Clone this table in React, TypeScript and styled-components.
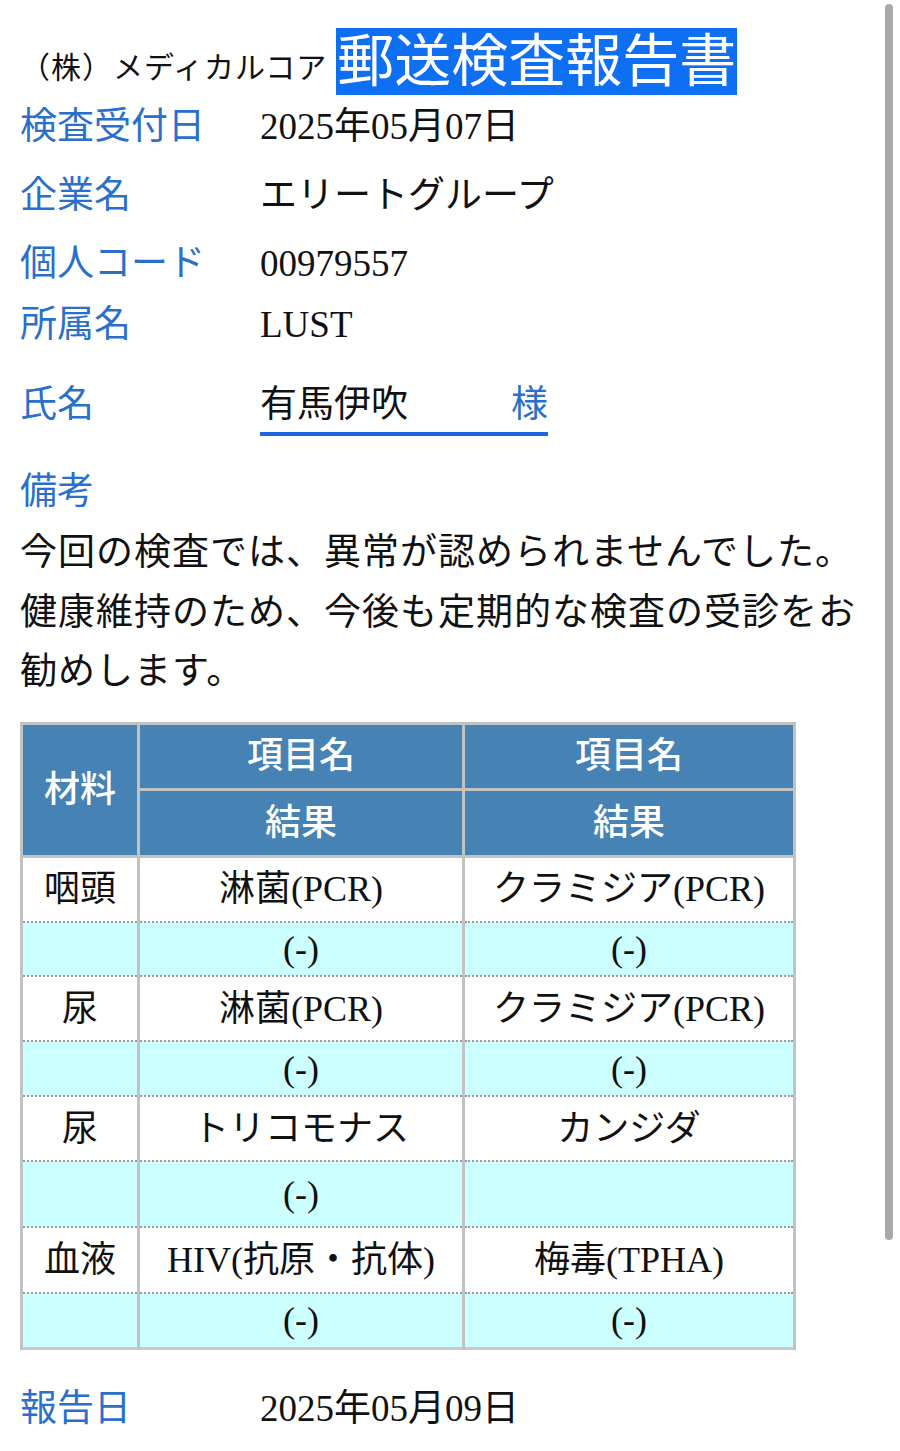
import React from "react";
import styled, { createGlobalStyle } from "styled-components";

const GlobalStyle = createGlobalStyle`
  html, body {
    margin: 0;
    padding: 0;
    background: #ffffff;
  }
  body {
    font-family: "Liberation Serif", "Noto Sans CJK JP", serif;
    color: #111111;
  }
`;

const Page = styled.div`
  padding: 28px 20px 40px 20px;
  width: 900px;
  box-sizing: border-box;
`;

const Header = styled.header`
  display: flex;
  align-items: flex-end;
  height: 67px;
`;

const Company = styled.span`
  font-size: 30px;
  letter-spacing: 1px;
  line-height: 40px;
  padding-bottom: 7px;
  margin-right: 9px;
  white-space: nowrap;
`;

const Title = styled.h1`
  margin: 0;
  font-size: 57px;
  line-height: 67px;
  font-weight: 400;
  color: #ffffff;
  background: #0f6ff2;
  padding: 0 1px;
  white-space: nowrap;
`;

const InfoRow = styled.div<{ $mt: number }>`
  display: grid;
  grid-template-columns: 240px auto;
  margin-top: ${(p) => p.$mt}px;
  font-size: 37px;
  line-height: 50px;
  align-items: start;
`;

const Label = styled.div`
  color: #2a6fca;
  white-space: nowrap;
`;

const Value = styled.div`
  white-space: nowrap;
`;

const NameBox = styled.div`
  display: flex;
  justify-content: space-between;
  width: 288px;
  padding-bottom: 2px;
  border-bottom: 4px solid #1b66dc;
`;

const Honorific = styled.span`
  color: #2a6fca;
`;

const NoteLabel = styled.div`
  margin-top: 31px;
  font-size: 37px;
  line-height: 50px;
  color: #2a6fca;
`;

const Note = styled.div`
  margin: 6px 0 0 0;
  font-size: 37px;
  letter-spacing: 1px;
  line-height: 59.5px;
  width: 852px;
`;

const Sentence = styled.p`
  margin: 0;
`;

const Table = styled.table`
  margin-top: 20px;
  border-collapse: collapse;
  width: 773px;
  table-layout: fixed;
  border: 3px solid #c9c9c9;
  font-size: 36px;
  text-align: center;
`;

const HeadCell = styled.th`
  background: #4682b4;
  color: #ffffff;
  font-weight: 500;
  border: 3px solid #c2c2c2;
  padding: 0;
  line-height: 44px;
`;

const BodyRow = styled.tr<{ $h: number; $result?: boolean }>`
  height: ${(p) => p.$h}px;
  background: ${(p) => (p.$result ? "#ccffff" : "#ffffff")};
`;

const HeadRow = styled.tr<{ $h: number }>`
  height: ${(p) => p.$h}px;
`;

const Cell = styled.td<{ $first: boolean }>`
  padding: 0;
  line-height: 44px;
  white-space: nowrap;
  border-left: 3px solid #c2c2c2;
  border-right: 3px solid #c2c2c2;
  border-top: ${(p) => (p.$first ? "3px solid #c2c2c2" : "2px dotted #9a9a9a")};
  border-bottom: 2px dotted #9a9a9a;
`;

const ReportRow = styled(InfoRow)``;

const Scrollbar = styled.div`
  position: fixed;
  top: 4px;
  right: 7px;
  width: 8px;
  height: 1236px;
  border-radius: 4px;
  background: #a9a9a9;
`;

type Item = {
  material: string;
  a: string;
  b: string;
  ra: string;
  rb: string;
  h: number;
  rh: number;
};

const items: Item[] = [
  { material: "咽頭", a: "淋菌(PCR)", b: "クラミジア(PCR)", ra: "(-)", rb: "(-)", h: 66, rh: 54 },
  { material: "尿", a: "淋菌(PCR)", b: "クラミジア(PCR)", ra: "(-)", rb: "(-)", h: 65, rh: 55 },
  { material: "尿", a: "トリコモナス", b: "カンジダ", ra: "(-)", rb: "", h: 65, rh: 66 },
  { material: "血液", a: "HIV(抗原・抗体)", b: "梅毒(TPHA)", ra: "(-)", rb: "(-)", h: 66, rh: 55 },
];

export default function App() {
  return (
    <>
      <GlobalStyle />
      <Page>
        <Header>
          <Company>（株）メディカルコア</Company>
          <Title>郵送検査報告書</Title>
        </Header>

        <InfoRow $mt={7}>
          <Label>検査受付日</Label>
          <Value>2025年05月07日</Value>
        </InfoRow>
        <InfoRow $mt={19}>
          <Label>企業名</Label>
          <Value>エリートグループ</Value>
        </InfoRow>
        <InfoRow $mt={18}>
          <Label>個人コード</Label>
          <Value>00979557</Value>
        </InfoRow>
        <InfoRow $mt={11}>
          <Label>所属名</Label>
          <Value>LUST</Value>
        </InfoRow>
        <InfoRow $mt={30}>
          <Label>氏名</Label>
          <NameBox>
            <span>有馬伊吹</span>
            <Honorific>様</Honorific>
          </NameBox>
        </InfoRow>

        <NoteLabel>備考</NoteLabel>
        <Note>
          <Sentence>今回の検査では、異常が認められませんでした。</Sentence>
          <Sentence>健康維持のため、今後も定期的な検査の受診をお勧めします。</Sentence>
        </Note>

        <Table>
          <colgroup>
            <col style={{ width: 117 }} />
            <col style={{ width: 325 }} />
            <col style={{ width: 331 }} />
          </colgroup>
          <thead>
            <HeadRow $h={66}>
              <HeadCell rowSpan={2}>材料</HeadCell>
              <HeadCell>項目名</HeadCell>
              <HeadCell>項目名</HeadCell>
            </HeadRow>
            <HeadRow $h={67}>
              <HeadCell>結果</HeadCell>
              <HeadCell>結果</HeadCell>
            </HeadRow>
          </thead>
          <tbody>
            {items.map((it, i) => (
              <React.Fragment key={i}>
                <BodyRow $h={it.h}>
                  <Cell $first={i === 0}>{it.material}</Cell>
                  <Cell $first={i === 0}>{it.a}</Cell>
                  <Cell $first={i === 0}>{it.b}</Cell>
                </BodyRow>
                <BodyRow $h={it.rh} $result>
                  <Cell $first={false}></Cell>
                  <Cell $first={false}>{it.ra}</Cell>
                  <Cell $first={false}>{it.rb}</Cell>
                </BodyRow>
              </React.Fragment>
            ))}
          </tbody>
        </Table>

        <ReportRow $mt={34}>
          <Label>報告日</Label>
          <Value>2025年05月09日</Value>
        </ReportRow>
      </Page>
      <Scrollbar />
    </>
  );
}
